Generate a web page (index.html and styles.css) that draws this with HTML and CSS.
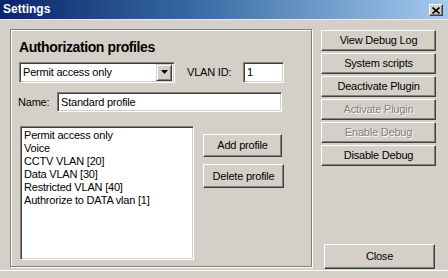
FILE: index.html
```html
<!DOCTYPE html>
<html>
<head>
<meta charset="utf-8">
<title>Settings</title>
<link rel="stylesheet" href="styles.css">
</head>
<body>
<div class="window">
  <div class="titlebar">
    <span class="title">Settings</span>
    <span class="caption-btn">
      <svg width="8" height="7" viewBox="0 0 8 7"><path d="M0.5 0.5 L7.5 6.5 M7.5 0.5 L0.5 6.5" stroke="#000" stroke-width="1.6" fill="none"/></svg>
    </span>
  </div>
  <div class="main">
    <div class="group">
      <div class="heading">Authorization profiles</div>
      <div class="row row-select">
        <div class="select">
          <span class="select-text">Permit access only</span>
          <span class="select-arrow"><svg width="7" height="4" viewBox="0 0 7 4"><path d="M0 0 H7 L3.5 4 Z" fill="#000"/></svg></span>
        </div>
        <span class="label vlan-label">VLAN ID:</span>
        <div class="field vlan-field">1</div>
      </div>
      <div class="row row-name">
        <span class="label name-label">Name:</span>
        <div class="field name-field">Standard profile</div>
      </div>
      <div class="row row-list">
        <div class="listbox">
          <div class="item">Permit access only</div>
          <div class="item">Voice</div>
          <div class="item">CCTV VLAN [20]</div>
          <div class="item">Data VLAN [30]</div>
          <div class="item">Restricted VLAN [40]</div>
          <div class="item">Authrorize to DATA vlan [1]</div>
        </div>
        <div class="list-actions">
          <div class="btn btn-add">Add profile</div>
          <div class="btn btn-delete">Delete profile</div>
        </div>
      </div>
    </div>
    <div class="side">
      <div class="btn side-btn">View Debug Log</div>
      <div class="btn side-btn">System scripts</div>
      <div class="btn side-btn">Deactivate Plugin</div>
      <div class="btn side-btn disabled">Activate Plugin</div>
      <div class="btn side-btn disabled">Enable Debug</div>
      <div class="btn side-btn">Disable Debug</div>
      <div class="btn close-btn">Close</div>
    </div>
  </div>
  <div class="footer-line"></div>
</div>
</body>
</html>
```

FILE: styles.css
```css
* { box-sizing: border-box; }
html, body { margin: 0; padding: 0; }
body {
  font-family: "Liberation Sans", Arial, sans-serif;
  font-size: 11px;
  letter-spacing: -0.2px;
  color: #000;
  background: #d4d0c8;
}
.window {
  width: 448px;
  height: 278px;
  background: #d4d0c8;
  overflow: hidden;
}
.titlebar {
  height: 19px;
  display: flex;
  align-items: center;
  justify-content: space-between;
  padding: 0 5px 0 3px;
  background: linear-gradient(to right, #0a246a 0%, #3a6ea5 45%, #a6caf0 100%);
}
.title {
  color: #fff;
  font-weight: bold;
  font-size: 12px;
  letter-spacing: 0;
  line-height: 19px;
}
.caption-btn {
  width: 14px;
  height: 12px;
  margin-top: 1px;
  display: flex;
  align-items: center;
  justify-content: center;
  background: #d4d0c8;
  border: 1px solid;
  border-color: #fff #404040 #404040 #fff;
  box-shadow: inset -1px -1px 0 #808080;
}
.main {
  display: flex;
  border-top: 1px solid #ebe9e4;
  padding: 9px 0 0 10px;
}
.group {
  width: 302px;
  height: 238px;
  border: 1px solid #808080;
  box-shadow: inset 1px 1px 0 #fff, 1px 1px 0 #fff;
  padding: 9px 0 0 0;
  display: flex;
  flex-direction: column;
}
.heading {
  font-weight: bold;
  font-size: 14px;
  letter-spacing: -0.4px;
  line-height: 16px;
  padding-left: 8px;
}
.row { display: flex; align-items: center; }
.row-select {
  height: 22px;
  margin-top: 6px;
  padding-left: 8px;
}
.select {
  width: 156px;
  height: 21px;
  display: flex;
  align-items: center;
  justify-content: space-between;
  background: #fff;
  border: 1px solid;
  border-color: #808080 #fff #fff #808080;
  box-shadow: inset 1px 1px 0 #404040, inset -1px -1px 0 #d4d0c8;
  padding: 2px 2px 2px 2px;
}
.select-text { padding-left: 1px; line-height: 13px; }
.select-arrow {
  width: 16px;
  height: 17px;
  display: flex;
  align-items: center;
  justify-content: center;
  background: #d4d0c8;
  border: 1px solid;
  border-color: #d4d0c8 #404040 #404040 #d4d0c8;
  box-shadow: inset 1px 1px 0 #fff, inset -1px -1px 0 #808080;
}
.label { line-height: 13px; }
.vlan-label {
  flex: 0 0 56px;
  margin-left: 12px;
}
.field {
  height: 21px;
  background: #fff;
  border: 1px solid;
  border-color: #808080 #fff #fff #808080;
  box-shadow: inset 1px 1px 0 #404040, inset -1px -1px 0 #d4d0c8;
  padding: 0 3px;
  display: flex;
  align-items: center;
  line-height: 13px;
}
.vlan-field { width: 41px; }
.row-name {
  height: 20px;
  margin-top: 9px;
  padding-left: 7px;
}
.name-label { flex: 0 0 39px; }
.name-field { width: 225px; height: 20px; }
.row-list {
  align-items: flex-start;
  margin-top: 14px;
  padding-left: 9px;
}
.listbox {
  width: 174px;
  height: 134px;
  background: #fff;
  border: 1px solid;
  border-color: #808080 #fff #fff #808080;
  box-shadow: inset 1px 1px 0 #404040, inset -1px -1px 0 #d4d0c8;
  padding: 2px 2px 2px 3px;
}
.item { line-height: 13px; white-space: nowrap; }
.list-actions {
  display: flex;
  flex-direction: column;
  margin-left: 9px;
  margin-top: 8px;
}
.btn {
  display: flex;
  align-items: center;
  justify-content: center;
  background: #d4d0c8;
  border: 1px solid;
  border-color: #fff #404040 #404040 #fff;
  box-shadow: inset -1px -1px 0 #808080;
  white-space: nowrap;
  line-height: 13px;
}
.btn-add { width: 79px; height: 23px; }
.btn-delete { width: 81px; height: 24px; margin-top: 7px; }
.side {
  width: 115px;
  height: 239px;
  margin-left: 9px;
  margin-top: 1px;
  display: flex;
  flex-direction: column;
  gap: 2px;
}
.side-btn { height: 21px; }
.disabled {
  color: #808080;
  text-shadow: 1px 1px 0 #fff;
}
.close-btn {
  width: 111px;
  height: 25px;
  margin: auto 0 0 3px;
}
.footer-line {
  height: 1px;
  margin-top: 1px;
  background: #fff;
}
```
